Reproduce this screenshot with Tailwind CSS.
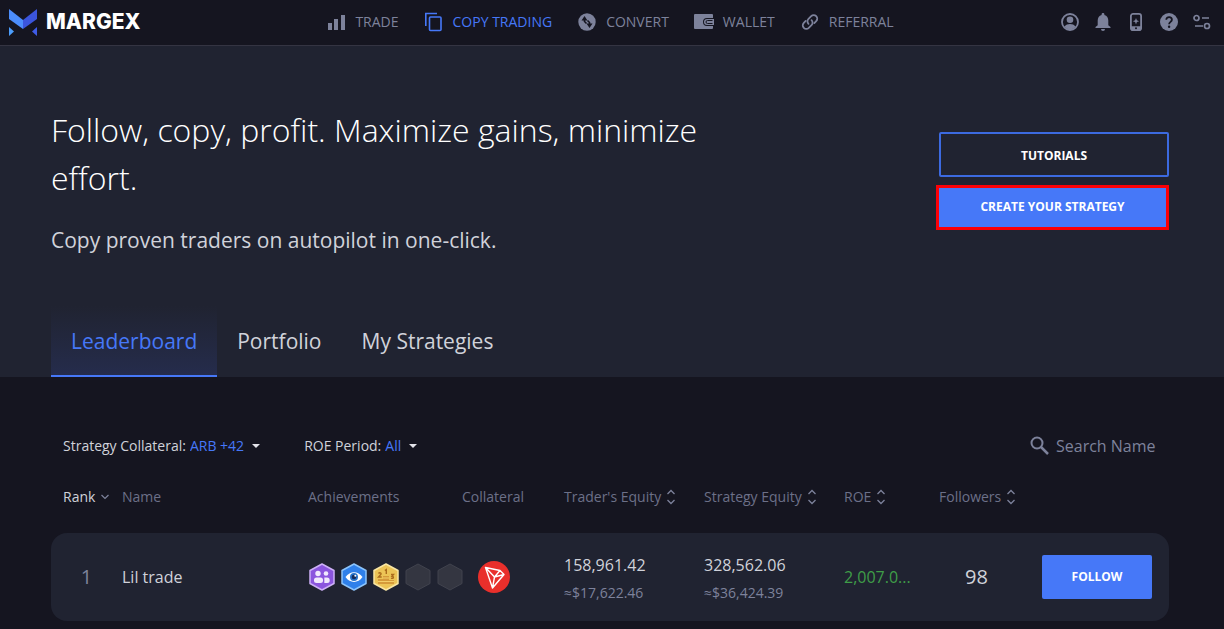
<!DOCTYPE html>
<html lang="en">
<head>
    <meta charset="UTF-8">
    <meta name="viewport" content="width=device-width, initial-scale=1.0">
    <title>Margex - Copy Trading</title>
    <script src="https://cdn.jsdelivr.net/npm/@tailwindcss/browser@4"></script>
</head>
<body class="min-h-screen bg-[#151520] font-['Open_Sans',sans-serif] text-[#d0d2da]">

    <!-- Top bar -->
    <header class="grid grid-cols-[1fr_auto_1fr] items-center h-[46px] pl-2 pr-3 pb-0.5 border-b border-[#343442] text-[#7d829b]">
        <a href="#" class="flex items-center gap-2 text-white" aria-label="Margex">
            <svg class="w-[30px] h-7" viewBox="0 0 30 28">
                <path d="M1 1l14 11v9L1 11z" fill="#4c8dfb"/>
                <path d="M29 1L15 12v9l14-10z" fill="#3b55dc"/>
                <path d="M1 19l5 4.500L1 28z" fill="#4c9dfb"/>
                <path d="M29 19l-5 4.500 5 4.500z" fill="#3f5ce6"/>
            </svg>
            <span class="font-['Inter',sans-serif] font-extrabold text-[21px] leading-7">MARGEX</span>
        </a>

        <nav class="flex items-center gap-[25px] text-sm font-medium">
            <a href="#" class="flex items-center gap-[9px]">
                <svg class="w-5 h-5" viewBox="0 0 20 20" fill="currentColor"><path d="M2 11h4v7H2zM8 7h4v11H8zM15 3h4v15h-4z"/></svg>
                TRADE
            </a>
            <a href="#" class="flex items-center gap-[9px] text-[#4678f8]">
                <svg class="w-5 h-5" viewBox="0 0 20 20" fill="none" stroke="currentColor" stroke-width="1.600"><path d="M1.800 14V1.500H13"/><rect x="5.500" y="5" width="11.500" height="13.500" rx="1"/></svg>
                COPY TRADING
            </a>
            <a href="#" class="flex items-center gap-[9px]">
                <svg class="w-5 h-5" viewBox="0 0 20 20"><circle cx="10" cy="10" r="8.700" fill="currentColor"/><path d="M4.500 8.500L7.500 4l3 4.500zM9.500 11.500h6l-3 4.500z" fill="#151520"/><path d="M7.500 7.500v2l2 2M12.500 12.500v-2l-2-2" fill="none" stroke="#151520" stroke-width="1.600"/></svg>
                CONVERT
            </a>
            <a href="#" class="flex items-center gap-[9px]">
                <svg class="w-5 h-5" viewBox="0 0 20 20"><path d="M1 2h17a1 1 0 0 1 1 1v3h-6a4 4 0 0 0 0 8h6v2a1 1 0 0 1-1 1H1a1 1 0 0 1-1-1V3a1 1 0 0 1 1-1z" fill="currentColor"/><path d="M13 7h7v6h-7a3 3 0 0 1 0-6z" fill="currentColor"/><path d="M13.500 8.500h5M13.500 11.500h5M13.500 8.500a1.500 1.500 0 0 0 0 3" fill="none" stroke="#151520"/></svg>
                WALLET
            </a>
            <a href="#" class="flex items-center gap-[9px]">
                <svg class="w-5 h-5" viewBox="0 0 20 20" fill="none" stroke="currentColor" stroke-width="1.800" stroke-linecap="round"><path d="M8.500 11.800a3.500 3.500 0 0 1 0-5l2.700-2.600a3.500 3.500 0 0 1 5 5l-1.900 1.900"/><path d="M11.500 8.200a3.500 3.500 0 0 1 0 5l-2.700 2.600a3.500 3.500 0 0 1-5-5l1.900-1.900"/></svg>
                REFERRAL
            </a>
        </nav>

        <div class="flex items-center justify-end gap-[13px]">
            <button type="button" aria-label="Account">
                <svg class="w-5 h-5" viewBox="0 0 20 20"><circle cx="10" cy="10" r="8" fill="none" stroke="currentColor" stroke-width="1.800"/><circle cx="10" cy="7.800" r="3.300" fill="currentColor"/><path d="M4.300 14.800c1.500-2 3.500-2.700 5.700-2.700s4.200.7 5.700 2.700A8 8 0 0 1 10 17.500a8 8 0 0 1-5.700-2.700z" fill="currentColor"/></svg>
            </button>
            <button type="button" aria-label="Notifications">
                <svg class="w-5 h-5" viewBox="0 0 20 20" fill="currentColor"><path d="M10 1c.9 0 1.400.6 1.400 1.400v.5C14 3.600 15.300 5.800 15.300 8.500v4.800l2.200 1.700v1h-15v-1l2.200-1.700V8.500c0-2.700 1.300-4.900 3.900-5.600v-.5C8.600 1.600 9.100 1 10 1zM8 17h4a2 2 0 0 1-4 0z"/></svg>
            </button>
            <button type="button" aria-label="Mobile app">
                <svg class="w-5 h-5" viewBox="0 0 20 20"><rect x="4.900" y="1.900" width="10.200" height="16.200" rx="2.200" fill="none" stroke="currentColor" stroke-width="1.800"/><path d="M4.500 14.300h11V17l-1.500 1.800H6L4.500 17zM10 6l.9 2.300 2.300.9-2.300.9-.9 2.300-.9-2.300-2.300-.9 2.300-.9z" fill="currentColor"/><circle cx="10" cy="16.300" r="1" fill="#151520"/></svg>
            </button>
            <button type="button" aria-label="Help">
                <svg class="w-5 h-5" viewBox="0 0 20 20"><circle cx="10" cy="10" r="9" fill="currentColor"/><path d="M7.300 7.800c0-3.600 5.600-3.500 5.600 0 0 2-2.800 2.200-2.800 4.400" fill="none" stroke="#151520" stroke-width="1.800"/><circle cx="10.100" cy="14.700" r="1.200" fill="#151520"/></svg>
            </button>
            <button type="button" aria-label="Settings">
                <svg class="w-5 h-5" viewBox="0 0 20 20" fill="none" stroke="currentColor" stroke-width="1.700"><circle cx="4.500" cy="6" r="2.500"/><path d="M10 6h7M3 14h8"/><circle cx="15" cy="14" r="2.500"/></svg>
            </button>
        </div>
    </header>

    <!-- Hero -->
    <section class="bg-[#202331] pl-[51px] pr-[55px]">
        <div class="flex items-start justify-between pt-[60px]">
            <div class="max-w-[680px]">
                <h1 class="text-[32px] leading-[48px] font-light text-white">Follow, copy, profit. Maximize gains, minimize effort.</h1>
                <p class="mt-[22px] text-[21px] leading-8">Copy proven traders on autopilot in one-click.</p>
            </div>
            <div class="flex flex-col items-end gap-2 pt-[26px] w-[233px] text-xs font-bold text-white">
                <a href="#" class="flex items-center justify-center w-[230px] h-[45px] pt-0.5 border-2 border-[#3c6ae0] rounded-xs">TUTORIALS</a>
                <button type="button" class="w-full h-[45px] pb-0.5 border-3 border-[#fb0007] bg-[#4678f8] font-bold cursor-pointer">CREATE YOUR STRATEGY</button>
            </div>
        </div>
        <nav class="flex mt-[50px] text-[21px]">
            <a href="#" class="flex items-center h-[71px] px-5 pt-0.5 border-b-2 border-[#4678f8] bg-linear-to-b from-[#202331] to-[#252c4c] text-[#4678f8]">Leaderboard</a>
            <a href="#" class="flex items-center h-[71px] px-5 pt-0.5 border-b-2 border-transparent">Portfolio</a>
            <a href="#" class="flex items-center h-[71px] px-5 pt-0.5 border-b-2 border-transparent">My Strategies</a>
        </nav>
    </section>

    <main class="pl-[51px] pr-[55px] pt-[53px]">
        <!-- Filters -->
        <div class="flex items-center px-3 h-8 text-sm">
            <div class="flex items-center">
                <label for="collateral">Strategy Collateral:</label>
                <div class="relative ml-1">
                    <select id="collateral" class="appearance-none field-sizing-content pr-5 text-[#4678f8]"><option>ARB +42</option></select>
                    <svg class="absolute right-1 top-2 w-2 h-1 pointer-events-none" viewBox="0 0 8 4" fill="#e4e4ea"><path d="M0 0h8L4 4z"/></svg>
                </div>
            </div>
            <div class="flex items-center ml-10">
                <label for="period">ROE Period:</label>
                <div class="relative ml-1">
                    <select id="period" class="appearance-none field-sizing-content pr-5 text-[#4678f8]"><option>All</option></select>
                    <svg class="absolute right-1 top-2 w-2 h-1 pointer-events-none" viewBox="0 0 8 4" fill="#e4e4ea"><path d="M0 0h8L4 4z"/></svg>
                </div>
            </div>
            <label class="flex items-center gap-1 ml-auto text-[#7d829b]">
                <svg class="w-6 h-6" viewBox="0 0 24 24" fill="none" stroke="currentColor" stroke-width="2"><circle cx="9" cy="9" r="5.500"/><path d="M13 13l7 7" stroke-width="2.500"/></svg>
                <input type="text" placeholder="Search Name" aria-label="Search Name" class="w-[101px] text-base outline-none placeholder:text-[#7d829b]">
            </label>
        </div>

        <!-- Leaderboard -->
        <table class="w-full mt-[19px] table-fixed text-left">
            <thead class="text-sm text-[#6c7088]">
                <tr class="h-8">
                    <th class="w-[71px] pl-3 font-normal text-[#d0d2da]">
                        <button type="button" class="flex items-center gap-1.5">Rank
                            <svg class="w-2 h-2" viewBox="0 0 8 8" fill="none" stroke="#7d829b" stroke-width="1.200"><path d="M.5 2L4 5.500 7.500 2"/></svg>
                        </button>
                    </th>
                    <th class="font-normal">Name</th>
                    <th class="w-[154px] font-normal">Achievements</th>
                    <th class="w-[102px] font-normal">Collateral</th>
                    <th class="w-[140px] font-normal">
                        <button type="button" class="flex items-center gap-1">Trader's Equity
                            <svg class="w-3 h-4" viewBox="0 0 12 16" fill="none" stroke="#7d829b" stroke-width="1.300"><path d="M2.500 5L6 1.500 9.500 5M2.500 11L6 14.500 9.500 11"/></svg>
                        </button>
                    </th>
                    <th class="w-[140px] font-normal">
                        <button type="button" class="flex items-center gap-1">Strategy Equity
                            <svg class="w-3 h-4" viewBox="0 0 12 16" fill="none" stroke="#7d829b" stroke-width="1.300"><path d="M2.500 5L6 1.500 9.500 5M2.500 11L6 14.500 9.500 11"/></svg>
                        </button>
                    </th>
                    <th class="w-[95px] font-normal">
                        <button type="button" class="flex items-center gap-1">ROE
                            <svg class="w-3 h-4" viewBox="0 0 12 16" fill="none" stroke="#7d829b" stroke-width="1.300"><path d="M2.500 5L6 1.500 9.500 5M2.500 11L6 14.500 9.500 11"/></svg>
                        </button>
                    </th>
                    <th class="w-[103px] font-normal">
                        <button type="button" class="flex items-center gap-1">Followers
                            <svg class="w-3 h-4" viewBox="0 0 12 16" fill="none" stroke="#7d829b" stroke-width="1.300"><path d="M2.500 5L6 1.500 9.500 5M2.500 11L6 14.500 9.500 11"/></svg>
                        </button>
                    </th>
                    <th class="w-[127px]"></th>
                </tr>
                <tr class="h-5"></tr>
            </thead>
            <tbody>
                <tr class="h-[88px] text-base">
                    <td class="bg-[#202331] rounded-l-2xl text-center text-xl text-[#7d829b]">1</td>
                    <td class="bg-[#202331]">Lil trade</td>
                    <td class="bg-[#202331]">
                        <div class="flex gap-1">
                            <svg class="w-7 h-7 shrink-0" viewBox="0 0 28 28">
                                <path d="M14 1l12 6.500v13L14 27 2 20.500v-13z" fill="#8b55de" stroke="#cdb0f7" stroke-width="1.500" stroke-linejoin="round"/>
                                <g fill="#f1e9fd"><circle cx="10" cy="10.500" r="2.700"/><circle cx="18" cy="10.500" r="2.300"/><rect x="6" y="14.500" width="9" height="5.500" rx="2.500"/><path d="M16.300 14.500H19a2.700 2.700 0 0 1 2.700 2.700v.3A2.500 2.500 0 0 1 19.200 20h-2.900z"/></g>
                            </svg>
                            <svg class="w-7 h-7 shrink-0" viewBox="0 0 28 28">
                                <path d="M14 1l12 6.500v13L14 27 2 20.500v-13z" fill="#2f80ea" stroke="#8cc4fb" stroke-width="1.500" stroke-linejoin="round"/>
                                <path d="M5.500 14c4.500-6.500 12.500-6.500 17 0-4.500 6.500-12.500 6.500-17 0z" fill="#fff"/><circle cx="14" cy="14" r="4" fill="#2873c9"/><circle cx="14" cy="14" r="2.300" fill="#152c5c"/><circle cx="15.300" cy="12.700" r="1" fill="#fff"/>
                            </svg>
                            <svg class="w-7 h-7 shrink-0" viewBox="0 0 28 28">
                                <path d="M14 1l12 6.500v13L14 27 2 20.500v-13z" fill="#ecc456" stroke="#f9e6a3" stroke-width="1.500" stroke-linejoin="round"/>
                                <g fill="none" stroke="#ab6c1c" stroke-width="1.400"><path d="M12.800 7.500l1.500-1V11M6.500 10.500c1-1.300 3-.6 2.500.7L6.500 14h3.200M19 11.500h2.500L20 13.300c2.300.2 1.600 2.700-1 1.900"/></g>
                                <path d="M6 16h5v-3h6v4h5v4H6z" fill="#d59a3a"/><path d="M6 18.500h16M11 15h6" stroke="#f3ce68"/>
                            </svg>
                            <svg class="w-7 h-7 shrink-0" viewBox="0 0 28 28"><path d="M14 1l12 6.500v13L14 27 2 20.500v-13z" fill="#343641" stroke="#41434e" stroke-linejoin="round"/></svg>
                            <svg class="w-7 h-7 shrink-0" viewBox="0 0 28 28"><path d="M14 1l12 6.500v13L14 27 2 20.500v-13z" fill="#343641" stroke="#41434e" stroke-linejoin="round"/></svg>
                        </div>
                    </td>
                    <td class="bg-[#202331] pl-4">
                        <svg class="w-8 h-8" viewBox="0 0 32 32"><circle cx="16" cy="16" r="16" fill="#e92f2b"/><path d="M7.500 6.500l14.500 3 4 4L14.500 27zM7.500 6.500l9 9.500L14.500 27M16.500 16L22 9.500M16.500 16l9.500-2.500" fill="none" stroke="#fff" stroke-width="1.400" stroke-linejoin="round"/></svg>
                    </td>
                    <td class="bg-[#202331] pt-1 leading-6">158,961.42<div class="mt-1 text-sm leading-6 text-[#7d829b]">≈$17,622.46</div></td>
                    <td class="bg-[#202331] pt-1 leading-6">328,562.06<div class="mt-1 text-sm leading-6 text-[#7d829b]">≈$36,424.39</div></td>
                    <td class="bg-[#202331] text-[#3f9d48]">2,007.0...</td>
                    <td class="bg-[#202331] pl-[26px] text-xl">98</td>
                    <td class="bg-[#202331] rounded-r-2xl pr-[17px]">
                        <button type="button" class="block w-full h-11 rounded-xs bg-[#4678f8] text-xs font-bold text-white cursor-pointer">FOLLOW</button>
                    </td>
                </tr>
            </tbody>
        </table>
    </main>
</body>
</html>
